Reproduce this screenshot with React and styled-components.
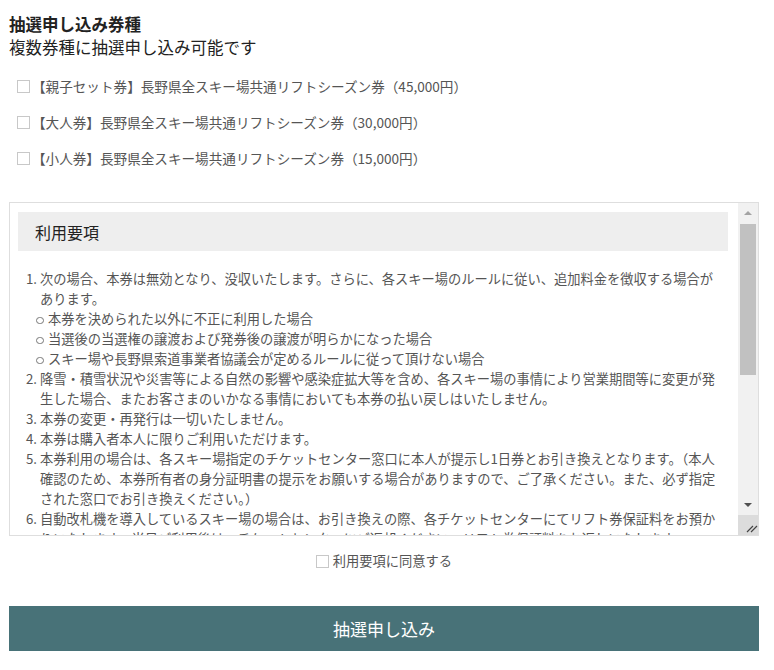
import React from 'react';
import styled, { createGlobalStyle } from 'styled-components';

const Global = createGlobalStyle`
  html, body { margin: 0; padding: 0; background: #fff; }
  body { font-family: "Noto Sans CJK JP", "Noto Sans", sans-serif; color: #333; }
  * { box-sizing: border-box; }
`;

const Page = styled.div`
  width: 750px;
  margin-left: 9px;
  padding-top: 13px;
`;

const Title = styled.h2`
  margin: 0;
  font-size: 16.5px;
  line-height: 23px;
  font-weight: 700;
  color: #222;
`;

const Lead = styled.p`
  margin: 0;
  font-size: 16.5px;
  line-height: 23px;
  font-weight: 400;
  color: #222;
`;

const OptionList = styled.ul`
  list-style: none;
  margin: 9px 0 0;
  padding: 0 0 0 8px;
`;

const OptionRow = styled.li`
  height: 36px;
  display: flex;
  align-items: center;
  gap: 2px;
  font-size: 13.6px;
  color: #555;
`;

const Check = styled.input.attrs({ type: 'checkbox' })`
  appearance: none;
  -webkit-appearance: none;
  margin: 0;
  width: 13px;
  height: 13px;
  border: 1px solid #c8c8c8;
  background: #fff;
  flex: none;
  &:checked { background: #487278; border-color: #487278; }
`;

const TermsBox = styled.div`
  margin-top: 26px;
  height: 334px;
  border: 1px solid #dedede;
  display: flex;
  overflow: hidden;
`;

const TermsScroll = styled.div`
  flex: 1;
  min-width: 0;
  overflow-y: auto;
  scrollbar-width: none;
  padding: 9px 10px 16px 8px;
`;

const Rail = styled.div`
  width: 20px;
  flex: none;
  display: flex;
  flex-direction: column;
  background: #f1f1f1;
`;

const RailButton = styled.div`
  height: 20px;
  flex: none;
  display: flex;
  align-items: center;
  justify-content: center;
`;

const Track = styled.div`
  flex: 1;
  padding: 1px 2px 0;
`;

const Thumb = styled.div`
  height: 151px;
  background: #c1c1c1;
`;

const Corner = styled.div`
  height: 20px;
  flex: none;
  background: #dcdcdc;
`;

const TermsHead = styled.div`
  height: 39px;
  background: #eeeeee;
  display: flex;
  align-items: center;
  padding-left: 17px;
  font-size: 16px;
  color: #222;
`;

const TermsList = styled.ol`
  margin: 18px 0 0;
  padding: 0 7px 0 22px;
  font-size: 13.25px;
  line-height: 20px;
  color: #555;
`;

const SubList = styled.ul`
  list-style: none;
  margin: 0;
  padding-left: 8px;
`;

const SubItem = styled.li`
  position: relative;
  &::before {
    content: '';
    position: absolute;
    left: -12px;
    top: 7.5px;
    width: 5.5px;
    height: 5.5px;
    border: 1px solid #777;
    border-radius: 50%;
  }
`;

const Agree = styled.label`
  margin-top: 17px;
  display: flex;
  justify-content: center;
  align-items: center;
  gap: 4px;
  font-size: 13.25px;
  line-height: 16px;
  color: #555;
`;

const Submit = styled.button`
  margin-top: 37px;
  width: 100%;
  height: 45px;
  border: none;
  background: #487278;
  color: #fff;
  font-family: inherit;
  font-size: 17px;
  line-height: 1;
  cursor: pointer;
  display: flex;
  align-items: center;
  justify-content: center;
`;

const options = [
  '【親子セット券】長野県全スキー場共通リフトシーズン券（45,000円）',
  '【大人券】長野県全スキー場共通リフトシーズン券（30,000円）',
  '【小人券】長野県全スキー場共通リフトシーズン券（15,000円）',
];

const Arrow = ({ up, color }) => (
  <svg width="8" height="4" viewBox="0 0 8 4">
    <path d={up ? 'M0 4 L4 0 L8 4 Z' : 'M0 0 L8 0 L4 4 Z'} fill={color} />
  </svg>
);

const Grip = () => (
  <svg width="20" height="20" viewBox="0 0 20 20">
    <path d="M9 17 L15 11 M13 17 L19 11" stroke="#444" strokeWidth="1.2" fill="none" />
  </svg>
);

export default function App() {
  return (
    <>
      <Global />
      <Page>
        <Title>抽選申し込み券種</Title>
        <Lead>複数券種に抽選申し込み可能です</Lead>
        <OptionList>
          {options.map((o) => (
            <OptionRow key={o}>
              <Check />
              <span>{o}</span>
            </OptionRow>
          ))}
        </OptionList>
        <TermsBox>
          <TermsScroll>
            <TermsHead>利用要項</TermsHead>
            <TermsList>
              <li>
                次の場合、本券は無効となり、没収いたします。さらに、各スキー場のルールに従い、追加料金を徴収する場合があります。
                <SubList>
                  <SubItem>本券を決められた以外に不正に利用した場合</SubItem>
                  <SubItem>当選後の当選権の譲渡および発券後の譲渡が明らかになった場合</SubItem>
                  <SubItem>スキー場や長野県索道事業者協議会が定めるルールに従って頂けない場合</SubItem>
                </SubList>
              </li>
              <li>降雪・積雪状況や災害等による自然の影響や感染症拡大等を含め、各スキー場の事情により営業期間等に変更が発生した場合、またお客さまのいかなる事情においても本券の払い戻しはいたしません。</li>
              <li>本券の変更・再発行は一切いたしません。</li>
              <li>本券は購入者本人に限りご利用いただけます。</li>
              <li>本券利用の場合は、各スキー場指定のチケットセンター窓口に本人が提示し1日券とお引き換えとなります。（本人確認のため、本券所有者の身分証明書の提示をお願いする場合がありますので、ご了承ください。また、必ず指定された窓口でお引き換えください。）</li>
              <li>自動改札機を導入しているスキー場の場合は、お引き換えの際、各チケットセンターにてリフト券保証料をお預かりいたします。当日ご利用後は、チケットセンターにご返却ください。リフト券保証料をお返しいたします。</li>
              <li>本券の転売・譲渡は禁止いたします。転売・譲渡が発覚した場合は、本券を無効とし、没収いたします。</li>
              <li>各スキー場の営業期間・営業時間は、各スキー場の公式ホームページ等でご確認ください。</li>
              <li>リフト・ゴンドラの運行状況は、天候等により変更となる場合があります。あらかじめご了承ください。</li>
              <li>本券の利用に際して発生した事故・怪我・盗難等について、主催者および各スキー場は一切の責任を負いかねます。</li>
              <li>抽選結果は、登録いただいたメールアドレスへお知らせいたします。</li>
              <li>当選された方は、指定された期間内にお支払い手続きを完了してください。期間内にお手続きがない場合は、当選を無効とさせていただきます。</li>
            </TermsList>
          </TermsScroll>
          <Rail aria-hidden="true">
            <RailButton><Arrow up color="#a3a3a3" /></RailButton>
            <Track><Thumb /></Track>
            <RailButton><Arrow color="#505050" /></RailButton>
            <Corner><Grip /></Corner>
          </Rail>
        </TermsBox>
        <Agree>
          <Check />
          <span>利用要項に同意する</span>
        </Agree>
        <Submit type="button">抽選申し込み</Submit>
      </Page>
    </>
  );
}
